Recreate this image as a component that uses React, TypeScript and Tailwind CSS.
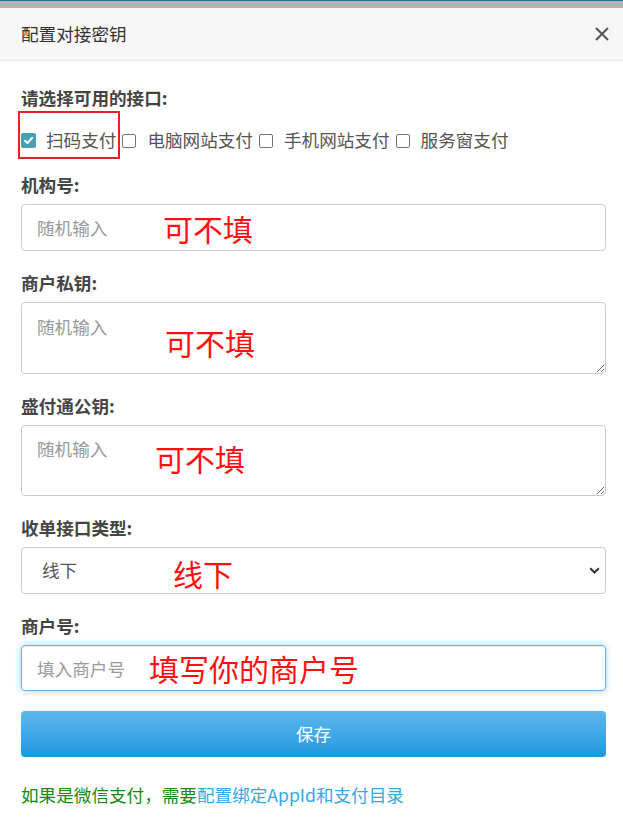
import React from "react";

const FONT = '"Noto Sans CJK SC", "Microsoft YaHei", "Liberation Sans", sans-serif';

function Label({ children }: { children: React.ReactNode }) {
  return (
    <div className="text-[17.6px] leading-[25px] font-bold text-[#444] mb-[7px]">{children}</div>
  );
}

function Red({ children, className }: { children: React.ReactNode; className: string }) {
  return (
    <span
      className={
        "absolute text-[30px] leading-[34px] text-[#ff1010] pointer-events-none whitespace-nowrap " + className
      }
    >
      {children}
    </span>
  );
}

function Box({ checked }: { checked?: boolean }) {
  if (checked) {
    return (
      <span className="inline-flex w-[15px] h-[15px] rounded-[2px] bg-[#4a9fb8] items-center justify-center shrink-0">
        <svg width="11" height="11" viewBox="0 0 10 10">
          <path d="M1.8 5.2 L4 7.3 L8.3 2.6" stroke="#fff" strokeWidth="1.8" fill="none" strokeLinecap="round" strokeLinejoin="round" />
        </svg>
      </span>
    );
  }
  return <span className="inline-block w-[14px] h-[14px] rounded-[2px] border border-[#767676] bg-white shrink-0" />;
}

export default function App() {
  return (
    <div className="w-[623px] h-[826px] bg-white overflow-hidden" style={{ fontFamily: FONT }}>
      <div className="h-[1px] bg-[#1c6fa6]" />
      <div className="h-[7px] bg-[#b3b3b3]" />
      <div className="h-[53px] bg-[#f7f7f7] border-b border-[#e5e5e5] flex items-center justify-between pl-[21px] pr-[13px]">
        <span className="text-[17.6px] text-[#333]">配置对接密钥</span>
        <svg width="16" height="16" viewBox="0 0 16 16">
          <path d="M2 2 L14 14 M14 2 L2 14" stroke="#555" strokeWidth="2" />
        </svg>
      </div>

      <div className="pl-[21px] pr-[17px] pt-[24px]">
        <Label>请选择可用的接口:</Label>
        <div className="flex items-center h-[25px] mt-[18px] text-[17.6px] text-[#555]">
          <span className="relative inline-flex items-center mr-[6px]">
            <Box checked />
            <span className="ml-[10px]">扫码支付</span>
            <span className="absolute left-[-3px] top-[-16px] w-[102px] h-[48px] border-2 border-[#e52222]" />
          </span>
          <span className="inline-flex items-center mr-[6px]">
            <Box />
            <span className="ml-[11px]">电脑网站支付</span>
          </span>
          <span className="inline-flex items-center mr-[6px]">
            <Box />
            <span className="ml-[11px]">手机网站支付</span>
          </span>
          <span className="inline-flex items-center">
            <Box />
            <span className="ml-[11px]">服务窗支付</span>
          </span>
        </div>

        <div className="mt-[19px]">
          <Label>机构号:</Label>
          <div className="relative">
            <input
              className="w-full h-[47px] border border-[#ccc] rounded-[4px] px-[15px] text-[17.6px] text-[#555] placeholder:text-[#999] outline-none"
              placeholder="随机输入"
            />
            <Red className="left-[142px] top-[7px]">可不填</Red>
          </div>
        </div>

        <div className="mt-[19px]">
          <Label>商户私钥:</Label>
          <div className="relative h-[72px]">
            <textarea
              className="block w-full h-[72px] border border-[#ccc] rounded-[4px] px-[15px] py-[11px] text-[17.6px] leading-[25px] text-[#555] placeholder:text-[#999] outline-none"
              placeholder="随机输入"
            />
            <Red className="left-[144px] top-[23px]">可不填</Red>
          </div>
        </div>

        <div className="mt-[19px]">
          <Label>盛付通公钥:</Label>
          <div className="relative h-[71px]">
            <textarea
              className="block w-full h-[71px] border border-[#ccc] rounded-[4px] px-[15px] py-[10px] text-[17.6px] leading-[25px] text-[#555] placeholder:text-[#999] outline-none"
              placeholder="随机输入"
            />
            <Red className="left-[134px] top-[16px]">可不填</Red>
          </div>
        </div>

        <div className="mt-[19px]">
          <Label>收单接口类型:</Label>
          <div className="relative">
            <select
              className="w-full h-[47px] border border-[#ccc] rounded-[4px] pl-[20px] text-[17.6px] text-[#555] bg-white appearance-none outline-none"
              defaultValue="线下"
            >
              <option>线下</option>
              <option>线上</option>
            </select>
            <svg className="absolute right-[6px] top-[20px] pointer-events-none" width="11" height="7" viewBox="0 0 11 7">
              <path d="M1.2 1.2 L5.5 5.5 L9.8 1.2" stroke="#333" strokeWidth="2" fill="none" />
            </svg>
            <Red className="left-[152px] top-[9px]">线下</Red>
          </div>
        </div>

        <div className="mt-[19px]">
          <Label>商户号:</Label>
          <div className="relative">
            <input
              className="w-full h-[46px] border border-[#66afe9] rounded-[4px] px-[15px] text-[17.6px] text-[#555] placeholder:text-[#999] outline-none shadow-[inset_0_1px_1px_rgba(0,0,0,0.075),0_0_6px_rgba(102,175,233,0.6)]"
              placeholder="填入商户号"
            />
            <Red className="left-[128px] top-[6px]">填写你的商户号</Red>
          </div>
        </div>

        <button className="mt-[20px] w-full h-[46px] rounded-[4px] bg-gradient-to-b from-[#5cb7ec] to-[#1a98e0] text-white text-[17.6px]">
          保存
        </button>

        <div className="mt-[25px] text-[17.6px] leading-[25px]">
          <span className="text-[#148a14]">如果是微信支付，需要</span>
          <span className="text-[#35a8e6]">配置绑定AppId和支付目录</span>
        </div>
      </div>
    </div>
  );
}
